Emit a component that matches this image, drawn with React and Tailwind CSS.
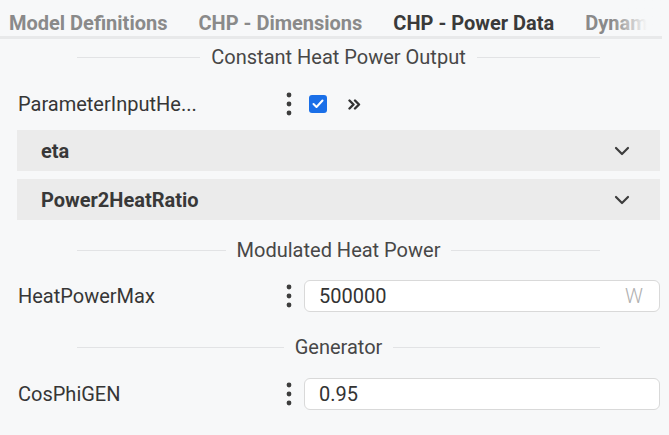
import React from "react";

const tabs = [
  { label: "Model Definitions", active: false },
  { label: "CHP - Dimensions", active: false },
  { label: "CHP - Power Data", active: true },
  { label: "Dynamics", active: false },
];

const Dots = () => (
  <svg width="6" height="24" viewBox="0 0 6 24" className="text-[#3d3d3d]">
    <circle cx="3" cy="3" r="2.4" fill="currentColor" />
    <circle cx="3" cy="12" r="2.4" fill="currentColor" />
    <circle cx="3" cy="21" r="2.4" fill="currentColor" />
  </svg>
);

const Chevron = () => (
  <svg width="16" height="10" viewBox="0 0 16 10" fill="none">
    <polyline
      points="2,2 8,8 14,2"
      stroke="#3d3d3d"
      strokeWidth="2.2"
      strokeLinecap="round"
      strokeLinejoin="round"
    />
  </svg>
);

const SectionTitle = ({ children }) => (
  <div className="flex items-center h-[36px] mx-[60px]">
    <div className="flex-1 h-px bg-[#e2e3e5]" />
    <span className="px-[11px] text-[20px] text-[#474747] leading-none">
      {children}
    </span>
    <div className="flex-1 h-px bg-[#e2e3e5]" />
  </div>
);

const Row = ({ label, children, className = "" }) => (
  <div className={`flex items-center ${className}`}>
    <div className="w-[263px] pl-[1px] text-[20px] text-[#363636] leading-none whitespace-nowrap">
      {label}
    </div>
    <div className="w-[18px] flex justify-center">
      <Dots />
    </div>
    <div className="flex-1 ml-[6px] flex items-center">{children}</div>
  </div>
);

const Bar = ({ label, className = "" }) => (
  <div
    className={`flex items-center justify-between h-[41px] bg-[#ebebeb] pl-[24px] pr-[30px] ${className}`}
  >
    <span className="text-[20px] font-bold text-[#383838] leading-none">
      {label}
    </span>
    <Chevron />
  </div>
);

const Field = ({ value, unit }) => (
  <div className="flex-1 flex items-center justify-between h-[32px] bg-white border border-[#d9d9d9] rounded-[6px] pl-[14px] pr-[16px]">
    <span className="text-[20px] text-[#333333] leading-none">{value}</span>
    {unit && (
      <span className="text-[20px] font-light text-[#b0b0b0] leading-none">
        {unit}
      </span>
    )}
  </div>
);

export default function App() {
  return (
    <div className="min-h-screen w-full bg-[#f7f8f9] font-['Roboto','Liberation_Sans',sans-serif] overflow-hidden">
      {/* Tabs */}
      <div className="relative mr-[7px] h-[39px] border-b-[3px] border-[#e8e9ea] flex items-end pl-[9px] gap-[31px] overflow-hidden">
        {tabs.map((t) => (
          <span
            key={t.label}
            className={`-mb-[3px] pb-[1px] leading-[24px] text-[20px] font-bold whitespace-nowrap border-b-[3px] ${
              t.active
                ? "text-[#3a3a3a] border-[#4267cf]"
                : "text-[#8a8a8a] border-transparent"
            }`}
          >
            {t.label}
          </span>
        ))}
        <div className="absolute right-0 top-0 h-[36px] w-[50px] bg-gradient-to-r from-transparent to-[#f7f8f9] to-70%" />
      </div>

      {/* Content */}
      <div className="pl-[17px] pr-[9px]">
        <SectionTitle>Constant Heat Power Output</SectionTitle>

        <Row label="ParameterInputHe..." className="h-[40px] mt-[9px]">
          <div className="ml-[5px] w-[18px] h-[18px] rounded-[3px] bg-[#1a6fe8] flex items-center justify-center">
            <svg width="12" height="10" viewBox="0 0 12 10" fill="none">
              <polyline
                points="1.5,5 4.5,8 10.5,1.5"
                stroke="white"
                strokeWidth="2"
                strokeLinecap="round"
                strokeLinejoin="round"
              />
            </svg>
          </div>
          <svg
            width="13"
            height="11"
            viewBox="0 0 13 11"
            fill="none"
            className="ml-[21px]"
          >
            <polyline
              points="1.5,1.5 5.5,5.5 1.5,9.5"
              stroke="#333"
              strokeWidth="2.4"
              strokeLinecap="round"
              strokeLinejoin="round"
            />
            <polyline
              points="7,1.5 11,5.5 7,9.5"
              stroke="#333"
              strokeWidth="2.4"
              strokeLinecap="round"
              strokeLinejoin="round"
            />
          </svg>
        </Row>

        <Bar label="eta" className="mt-[6px]" />
        <Bar label="Power2HeatRatio" className="mt-[8px]" />

        <div className="mt-[12px]">
          <SectionTitle>Modulated Heat Power</SectionTitle>
        </div>
        <Row label="HeatPowerMax" className="mt-[12px] h-[32px]">
          <Field value="500000" unit="W" />
        </Row>

        <div className="mt-[17px]">
          <SectionTitle>Generator</SectionTitle>
        </div>
        <Row label="CosPhiGEN" className="mt-[13px] h-[32px]">
          <Field value="0.95" />
        </Row>
      </div>
    </div>
  );
}
